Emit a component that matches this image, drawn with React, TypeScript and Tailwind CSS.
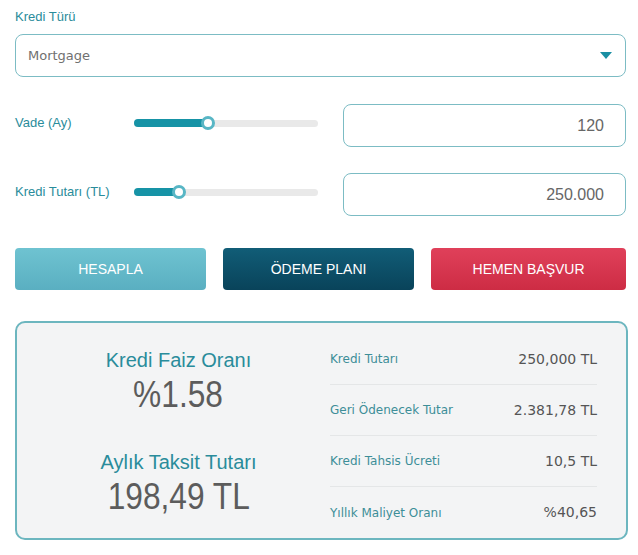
import { useState } from "react"

const teal = "text-[#2a8c9b]"

type SliderProps = {
  pct: number
}

function Slider({ pct }: SliderProps) {
  return (
    <div className="relative mb-[5px] h-[7px] w-[184px] rounded-full bg-[#e9e9e9]">
      <div
        className="absolute left-0 top-[-0.5px] h-[8px] rounded-full bg-[#1693a6]"
        style={{ width: `${pct}%` }}
      />
      <div
        className="absolute top-1/2 h-[14px] w-[14px] -translate-x-1/2 -translate-y-1/2 rounded-full border-[3px] border-[#58b6c5] bg-white"
        style={{ left: `${pct}%` }}
      />
    </div>
  )
}

type RowProps = {
  label: string
  value: string
  pct: number
}

function InputRow({ label, value, pct }: RowProps) {
  return (
    <div className="flex items-center">
      <div className={`mb-[5px] w-[119px] text-[13px] ${teal}`}>{label}</div>
      <Slider pct={pct} />
      <div className="ml-[25px] flex h-[43px] flex-1 items-center justify-end rounded-[8px] border border-[#7cbcc4] bg-white pr-[21px] text-[16px] text-[#666]">
        {value}
      </div>
    </div>
  )
}

const details = [
  { label: "Kredi Tutarı", value: "250,000 TL" },
  { label: "Geri Ödenecek Tutar", value: "2.381,78 TL" },
  { label: "Kredi Tahsis Ücreti", value: "10,5 TL" },
  { label: "Yıllık Maliyet Oranı", value: "%40,65" },
]

export default function App() {
  const [type] = useState("Mortgage")

  return (
    <div className="flex h-[555px] w-[638px] flex-col bg-white pl-[15px] pr-[12px] pt-[8px] font-['Liberation_Sans',Arial,sans-serif]">
      <div className={`h-[18px] text-[13px] leading-[18px] ${teal}`}>Kredi Türü</div>

      <div className="mt-[8px] flex h-[43px] items-center justify-between rounded-[8px] border border-[#7cbcc4] bg-white pl-[12px] pr-[13px]">
        <span className="font-['DejaVu_Sans',sans-serif] text-[13px] text-[#707070]">{type}</span>
        <svg width="12" height="7" viewBox="0 0 12 7">
          <path d="M0 0 L12 0 L6 7 Z" fill="#1a8fa3" />
        </svg>
      </div>

      <div className="mt-[27px] flex flex-col gap-[26px]">
        <InputRow label="Vade (Ay)" value="120" pct={40} />
        <InputRow label="Kredi Tutarı (TL)" value="250.000" pct={24.5} />
      </div>

      <div className="mt-[32px] flex gap-[17px]">
        <button className="flex h-[42px] flex-1 items-center justify-center rounded-[4px] bg-gradient-to-b from-[#6fc3d1] to-[#5aafc1] text-[14px] text-white">
          HESAPLA
        </button>
        <button className="flex h-[42px] flex-1 items-center justify-center rounded-[4px] bg-gradient-to-b from-[#115d77] to-[#09435a] text-[14px] text-white">
          ÖDEME PLANI
        </button>
        <button className="flex h-[42px] flex-[1.02] items-center justify-center rounded-[4px] bg-gradient-to-b from-[#e0405a] to-[#cd2c44] text-[14px] text-white">
          HEMEN BAŞVUR
        </button>
      </div>

      <div className="mr-[-2px] mt-[31px] flex h-[219px] rounded-[10px] border-2 border-[#6cb6bf] bg-[#f3f4f5]">
        <div className="flex flex-1 flex-col items-center pl-[10px] pt-[25px]">
          <div className={`text-[20px] leading-[24px] ${teal}`}>Kredi Faiz Oranı</div>
          <div className="mt-[3px] scale-x-[0.88] text-[36px] leading-[40px] text-[#5c5c5c]">%1.58</div>
          <div className={`mt-[35px] text-[20px] leading-[24px] ${teal}`}>Aylık Taksit Tutarı</div>
          <div className="mt-[3px] scale-x-[0.88] text-[36px] leading-[40px] text-[#5c5c5c]">198,49 TL</div>
        </div>
        <div className="mr-[29px] flex w-[267px] flex-col pt-[11px] font-['DejaVu_Sans',sans-serif]">
          {details.map((d, i) => (
            <div
              key={d.label}
              className={`flex h-[51.5px] items-center justify-between ${i < details.length - 1 ? "border-b border-[#e4e6e7]" : ""}`}
            >
              <span className="text-[12px] text-[#3d8e98]">{d.label}</span>
              <span className="text-[14px] text-[#555]">{d.value}</span>
            </div>
          ))}
        </div>
      </div>
    </div>
  )
}
